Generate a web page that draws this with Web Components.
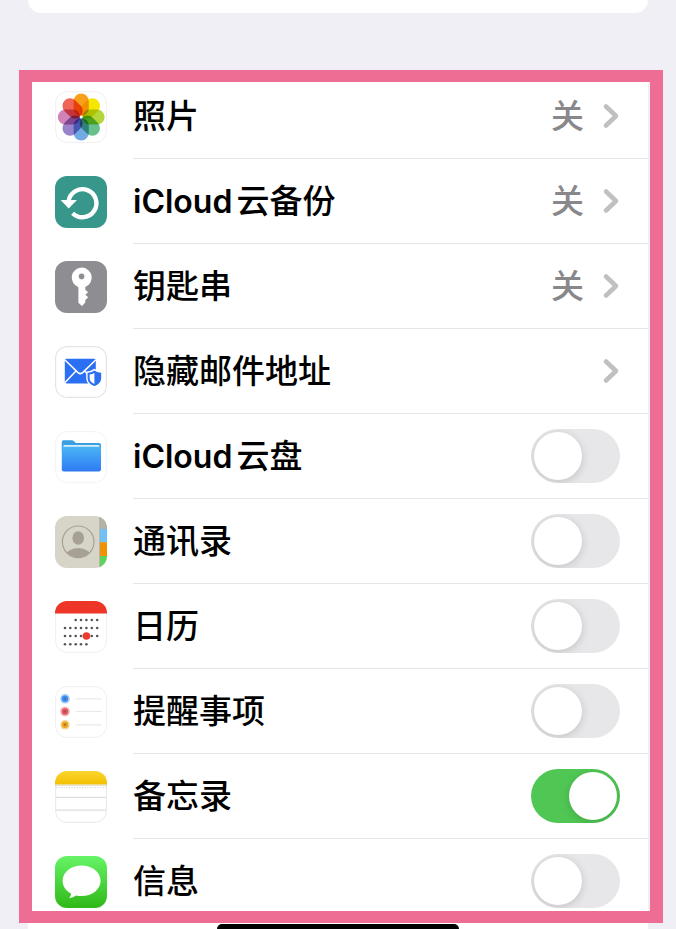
<!DOCTYPE html>
<html lang="zh-CN">
<head>
<meta charset="utf-8">
<meta name="viewport" content="width=device-width, initial-scale=1">
<title>iCloud</title>
<style>
    body {
        margin: 0;
        background: #f0eff5;
        font-family: Inter, "Noto Sans CJK SC", sans-serif;
    }
    .latin {
        margin-right: 4px;
        font-size: 32px;
        font-weight: 600;
    }
</style>
</head>
<body>
<settings-page>
    <settings-list>
        <link-row value="关"><app-icon slot="icon" name="photos"></app-icon>照片</link-row>
        <link-row value="关"><app-icon slot="icon" name="backup"></app-icon><span class="latin">iCloud</span>云备份</link-row>
        <link-row value="关"><app-icon slot="icon" name="keychain"></app-icon>钥匙串</link-row>
        <link-row><app-icon slot="icon" name="mail"></app-icon>隐藏邮件地址</link-row>
        <switch-row><app-icon slot="icon" name="drive"></app-icon><span class="latin">iCloud</span>云盘</switch-row>
        <switch-row><app-icon slot="icon" name="contacts"></app-icon>通讯录</switch-row>
        <switch-row><app-icon slot="icon" name="calendar"></app-icon>日历</switch-row>
        <switch-row><app-icon slot="icon" name="reminders"></app-icon>提醒事项</switch-row>
        <switch-row checked><app-icon slot="icon" name="notes"></app-icon>备忘录</switch-row>
        <switch-row><app-icon slot="icon" name="messages"></app-icon>信息</switch-row>
    </settings-list>
</settings-page>

<script>
const petals = ["#f9a01b", "#f6e600", "#b4d63a", "#68c08c", "#74aae4", "#9a83c8", "#d083b6", "#ef6558"];

const dot = (x, y) => `<circle cx="${x}" cy="${y}" r="1.3"/>`;
const days = [10, 15.3, 20.7, 26, 31.4, 36.8, 42.2];

const icons = {
    photos: {
        back: "#fff", edge: "#f3f1f3",
        art: petals.map((color, i) =>
            `<rect class="petal" x="18.6" y="2.6" width="15.2" height="22.4" rx="7.6" fill="${color}" transform="rotate(${i * 45} 26.2 26)"/>`
        ).join("") + `<circle cx="26.2" cy="26" r="1.4" fill="#fff"/>`
    },
    backup: {
        back: "#37978b",
        art: `<path d="M17.6 37.2A14 14 0 1 0 13.6 25" fill="none" stroke="#fff" stroke-width="4.4"/>
            <path d="M5.6 24h16.4l-8.3 8.6z" fill="#fff"/>`
    },
    keychain: {
        back: "#8e8d92",
        art: `<path fill="#fff" fill-rule="evenodd" d="M26.6 6.600a10.100 10.100 0 0 1 3.700 19.500v2.700l2.800 2.400-2.800 2.600 3 2.500-3 2.600v2.500l-3.300 3.600-3.600-3.200V26.200A10.100 10.100 0 0 1 26.600 6.600zM26.600 12.600a2.800 2.800 0 1 0 0 5.600a2.800 2.800 0 0 0 0-5.600z"/>`
    },
    mail: {
        back: "#fff", edge: "#e3e3e5",
        art: `<rect x="9.800" y="12.800" width="31" height="24.600" rx="2" fill="#2b6ff2"/>
            <path d="M10 14l13 12.600q2.300 2 4.600 0l13-12.600M10 36.500l11-11.500M29.500 25l7 7" fill="none" stroke="#fff" stroke-width="1.500"/>
            <path d="M39.400 23.600q3.200 2.600 7.500 2.600v6q0 5.600-7.500 8.800-7.500-3.200-7.500-8.800v-6q4.300 0 7.500-2.600z" fill="#2b6ff2" stroke="#fff" stroke-width="1.400"/>
            <path d="M39.400 27v11q-4.800-2.400-4.800-5.800v-3.600q2.800-.2 4.800-1.600z" fill="#fff"/>`
    },
    drive: {
        back: "#fff", edge: "#f2f5f7",
        art: `<linearGradient id="folder" x2="0" y2="1"><stop stop-color="#4ab4f5"/><stop offset="1" stop-color="#2e7bf4"/></linearGradient>
            <path d="M6.8 12V11q0-1.7 1.8-1.7h8.2q1.2 0 2 .8l2 2H44q2 0 2 2V20H6.8z" fill="#3a9fe2"/>
            <rect x="8.4" y="14" width="36" height="4" rx="1" fill="#d8f0fb"/>
            <path d="M6.8 15.8H46v22.4q0 2.2-2.2 2.2H9q-2.2 0-2.2-2.2z" fill="url(#folder)"/>`
    },
    contacts: {
        back: "#d7d4c8",
        art: `<path d="M44.8 0H52v13h-7.2z" fill="#b4b2a6"/>
            <path d="M44.8 13H52v13.3h-7.2z" fill="#6fc1fa"/>
            <path d="M44.8 26.3H52V40h-7.2z" fill="#f29100"/>
            <path d="M44.8 40H52v12h-7.2z" fill="#5bd35c"/>
            <path d="M44.8 0v52" stroke="#aaa79b" stroke-width=".8"/>
            <clipPath id="face"><circle cx="23.2" cy="25.8" r="15.6"/></clipPath>
            <g clip-path="url(#face)" fill="#a7a097"><ellipse cx="23.2" cy="22" rx="5.8" ry="6.8"/><ellipse cx="23.2" cy="41" rx="13.2" ry="9"/></g>
            <circle cx="23.2" cy="25.8" r="15.8" fill="none" stroke="#a7a097" stroke-width="1.2"/>`
    },
    calendar: {
        back: "#fff", edge: "#f1f1f1",
        art: `<g fill="#555">
            ${days.slice(2).map(x => dot(x, 19)).join("")}
            ${days.map(x => dot(x, 27)).join("")}
            ${days.map(x => dot(x, 35)).join("")}
            ${days.slice(0, 5).map(x => dot(x, 43.2)).join("")}
            </g><circle cx="31.4" cy="35" r="3.8" fill="#ec3b30"/>`,
        header: `<path d="M0 0h52v12.4H0z" fill="#ed3528"/>`
    },
    reminders: {
        back: "#fff", edge: "#f1f1f1",
        art: [["#3b8ff0", 12.8], ["#e4545a", 25.5], ["#eda31c", 38.8]].map(([color, y]) =>
            `<circle cx="10" cy="${y}" r="4.8" fill="${color}" opacity=".45"/>
            <circle cx="10" cy="${y}" r="3.2" fill="${color}"/>
            <circle cx="10" cy="${y}" r="1.2" fill="#555" opacity=".5"/>
            <path d="M20.5 ${y}h26" stroke="#e9e9e9" stroke-width="1.2"/>`
        ).join("")
    },
    notes: {
        back: "#fff", edge: "#ebebeb",
        art: `<path d="M1 16.4h50" stroke="#ccc" stroke-width="1" stroke-dasharray="1 1.6"/>
            <path d="M0 26.4h52M0 39.2h52" stroke="#dedede" stroke-width="1.2"/>`,
        header: `<linearGradient id="pad" x2="0" y2="1"><stop stop-color="#fad631"/><stop offset="1" stop-color="#f4c000"/></linearGradient>
            <path d="M0 0h52v13.6H0z" fill="url(#pad)"/>
            <path d="M0 14.2h52" stroke="#d2c9a8" stroke-width=".8"/>`
    },
    messages: {
        back: "linear-gradient(#66f467, #2fb817)",
        art: `<path fill="#fff" d="M26.6 9.4c10.6 0 19 6.8 19 15.3s-8.4 15.4-19 15.4q-2.9 0-5.5-.6-3 2.4-7 2.7 2-2.2 2-4.6C11 34.8 7.6 30.1 7.6 24.7c0-8.5 8.4-15.3 19-15.3z"/>`
    }
};

class AppIcon extends HTMLElement {
    constructor() {
        super();
        this.attachShadow({ mode: "open" });
    }
    connectedCallback() {
        const icon = icons[this.getAttribute("name")];
        this.shadowRoot.innerHTML = `
        <style>
        :host {
            display: block;
            width: 52px;
            height: 52px;
            border-radius: 12px;
            overflow: hidden;
            isolation: isolate;
            background: ${icon.back};
        }
        svg {
            display: block;
        }
        .petal {
            mix-blend-mode: multiply;
        }
        </style>
        <svg viewBox="0 0 52 52" width="52" height="52" aria-hidden="true">
            ${icon.art}
            ${icon.edge ? `<rect x=".6" y=".6" width="50.8" height="50.8" rx="11.4" fill="none" stroke="${icon.edge}" stroke-width="1.2"/>` : ""}
            ${icon.header || ""}
        </svg>`;
    }
}
customElements.define("app-icon", AppIcon);

// shared by both kinds of row
const rowStyles = `
    :host {
        display: block;
        color: #000;
        --line: #e6e6e7;
    }
    :host(:last-child) {
        --line: transparent;
    }
    .row {
        display: flex;
        align-items: stretch;
        gap: 26px;
        width: 100%;
        height: 85px;
        box-sizing: border-box;
        margin: 0;
        padding: 0 0 0 23px;
        border: 0;
        background: none;
        color: inherit;
        font: inherit;
        text-align: left;
        cursor: pointer;
    }
    .icon {
        display: flex;
        align-items: center;
    }
    .body {
        flex: 1;
        display: flex;
        align-items: center;
        padding-right: 28px;
        border-bottom: 1px solid var(--line);
    }
    .name {
        flex: 1;
        font-size: 33px;
        line-height: 48px;
        font-weight: 500;
        white-space: nowrap;
    }`;

class LinkRow extends HTMLElement {
    constructor() {
        super();
        this.attachShadow({ mode: "open" });
    }
    connectedCallback() {
        const value = this.getAttribute("value");
        this.shadowRoot.innerHTML = `
        <style>
        ${rowStyles}
        .value {
            margin-right: 18px;
            color: #88888b;
            font-size: 33px;
            line-height: 48px;
            font-weight: 500;
        }
        </style>
        <button class="row" type="button">
            <span class="icon"><slot name="icon"></slot></span>
            <span class="body">
                <span class="name"><slot></slot></span>
                ${value ? `<span class="value">${value}</span>` : ""}
                <svg width="18" height="26" viewBox="0 0 18 26" aria-hidden="true">
                    <path d="M4 3.5l10 9.5L4 22.5" fill="none" stroke="#c0c0c2" stroke-width="4.6" stroke-linecap="round" stroke-linejoin="round"/>
                </svg>
            </span>
        </button>`;
    }
}
customElements.define("link-row", LinkRow);

class SwitchRow extends HTMLElement {
    constructor() {
        super();
        this.attachShadow({ mode: "open" });
    }
    connectedCallback() {
        this.shadowRoot.innerHTML = `
        <style>
        ${rowStyles}
        input {
            appearance: none;
            display: flex;
            flex: none;
            box-sizing: border-box;
            width: 89px;
            height: 54px;
            margin: 0;
            padding: 3px;
            border-radius: 27px;
            background: #e7e7e9;
            overflow: hidden;
            cursor: pointer;
        }
        input::before {
            content: "";
            width: 48px;
            height: 48px;
            border-radius: 50%;
            background: #fff;
            box-shadow: 0 2px 8px rgba(0, 0, 0, .16);
        }
        input:checked {
            justify-content: flex-end;
            background: #50c754;
        }
        </style>
        <label class="row" for="toggle">
            <span class="icon"><slot name="icon"></slot></span>
            <span class="body">
                <span class="name"><slot></slot></span>
                <input id="toggle" type="checkbox" role="switch" ${this.hasAttribute("checked") ? "checked" : ""}>
            </span>
        </label>`;
    }
}
customElements.define("switch-row", SwitchRow);

class SettingsList extends HTMLElement {
    constructor() {
        super();
        this.attachShadow({ mode: "open" }).innerHTML = `
        <style>
        :host {
            display: block;
            border: solid #ee6d95;
            border-width: 12px 13px;
            background: #fff;
            overflow: hidden;
        }
        /* the frame cuts into the first and the last row */
        div {
            margin: -8px 0 -13px;
            border-right: 2px solid #f0eff5;
        }
        </style>
        <div><slot></slot></div>`;
    }
}
customElements.define("settings-list", SettingsList);

class SettingsPage extends HTMLElement {
    constructor() {
        super();
        this.attachShadow({ mode: "open" }).innerHTML = `
        <style>
        :host {
            display: flex;
            flex-direction: column;
            min-height: 100vh;
        }
        .previous {
            height: 13px;
            margin: 0 28px 57px;
            border-radius: 0 0 18px 18px;
            background: #fff;
        }
        main {
            margin: 0 13px 0 19px;
        }
        .next {
            flex: 1;
            display: flex;
            justify-content: center;
            align-items: flex-end;
            margin: 0 28px;
            background: #fff;
        }
        .home {
            width: 242px;
            height: 5px;
            border-radius: 5px 5px 0 0;
            background: #000;
        }
        </style>
        <div class="previous"></div>
        <main><slot></slot></main>
        <div class="next"><div class="home"></div></div>`;
    }
}
customElements.define("settings-page", SettingsPage);
</script>
</body>
</html>
